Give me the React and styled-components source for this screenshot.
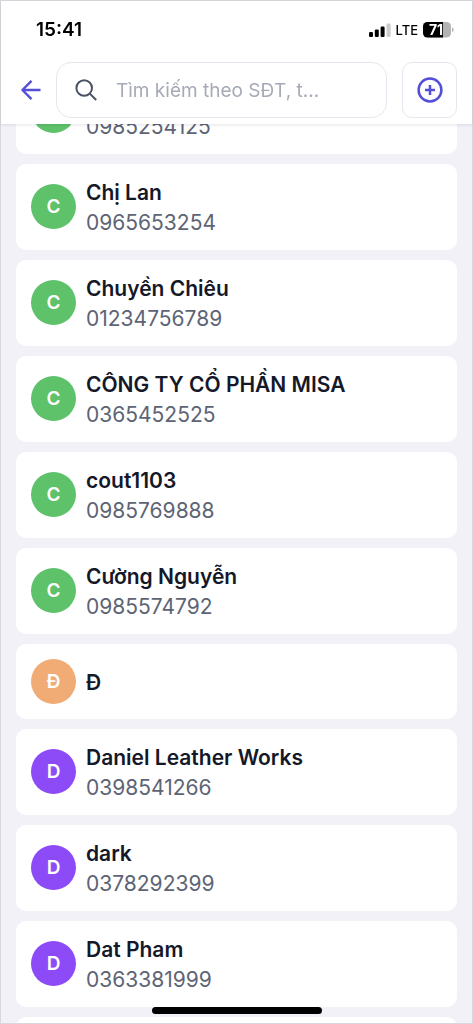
import React from 'react';
import styled, { createGlobalStyle } from 'styled-components';

const GlobalStyle = createGlobalStyle`
  * {
    box-sizing: border-box;
  }
  body {
    margin: 0;
    font-family: Inter, 'Noto Sans', sans-serif;
    color: #141828;
  }
`;

const Screen = styled.div`
  height: 100vh;
  overflow: hidden;
  border: 1px solid #d8d8dc;
  background: #f2f1f7;
`;

const Header = styled.header`
  position: fixed;
  top: 1px;
  left: 1px;
  right: 1px;
  z-index: 1;
  padding-bottom: 6px;
  background: #fff;
  box-shadow: 0 1px 3px rgba(40, 40, 80, 0.12);
`;

const StatusBar = styled.div`
  display: flex;
  align-items: center;
  justify-content: space-between;
  height: 57px;
  padding: 0 18px 0 35px;
  color: #000;
`;

const Clock = styled.time`
  font-size: 19px;
  font-weight: 600;
`;

const StatusIcons = styled.div`
  display: flex;
  align-items: center;
  gap: 5px;
  font-size: 13px;
  font-weight: 500;
`;

const Toolbar = styled.div`
  display: flex;
  align-items: center;
  gap: 15px;
  padding: 4px 15px 0 19px;
`;

const BackButton = styled.button`
  display: flex;
  padding: 0;
  border: 0;
  background: none;
  color: #534fd6;
`;

const SearchBox = styled.label`
  display: flex;
  flex: 1;
  align-items: center;
  gap: 18px;
  min-width: 0;
  height: 56px;
  padding: 0 17px;
  border: 1px solid #e6e6ee;
  border-radius: 15px;
  color: #4b5263;
`;

const SearchInput = styled.input`
  flex: 1;
  min-width: 0;
  padding: 0;
  border: 0;
  outline: 0;
  background: none;
  font: 400 19px Inter, 'Noto Sans', sans-serif;
  color: #141828;
  &::placeholder {
    color: #a5aab6;
  }
`;

const AddButton = styled.button`
  display: flex;
  align-items: center;
  justify-content: center;
  width: 55px;
  height: 56px;
  padding: 0;
  border: 1px solid #e6e6ee;
  border-radius: 10px;
  background: #fff;
  color: #534fd6;
`;

const List = styled.ul`
  display: flex;
  flex-direction: column;
  gap: 10px;
  height: 100%;
  margin: 0;
  padding: 67px 15px 0;
  overflow-y: auto;
  scrollbar-width: none;
  list-style: none;
`;

const Card = styled.li`
  display: flex;
  flex-shrink: 0;
  align-items: center;
  gap: 10px;
  min-height: 75px;
  padding: 14px 15px 12px;
  border-radius: 10px;
  background: #fff;
`;

const Avatar = styled.div`
  display: flex;
  flex-shrink: 0;
  align-items: center;
  justify-content: center;
  width: 45px;
  height: 45px;
  margin-bottom: 3px;
  border-radius: 50%;
  background: ${({ $color }) => $color};
  color: #fff;
  font-size: 19px;
  font-weight: 600;
`;

const Name = styled.div`
  min-height: 30px;
  font-size: 21px;
  font-weight: 600;
  line-height: 30px;
`;

const Phone = styled.div`
  font-size: 21px;
  line-height: 30px;
  color: #5d6474;
`;

const HomeIndicator = styled.div`
  position: fixed;
  bottom: 10px;
  left: 50%;
  z-index: 1;
  width: 170px;
  height: 7px;
  border-radius: 4px;
  background: #000;
  transform: translateX(-50%);
`;

const GREEN = '#5dc269';
const ORANGE = '#f1ac76';
const PURPLE = '#8c4bf6';

const contacts = [
  { initial: 'C', color: GREEN, phone: '0985254125' },
  { initial: 'C', color: GREEN, name: 'Chị Lan', phone: '0965653254' },
  { initial: 'C', color: GREEN, name: 'Chuyền Chiêu', phone: '01234756789' },
  { initial: 'C', color: GREEN, name: 'CÔNG TY CỔ PHẦN MISA', phone: '0365452525' },
  { initial: 'C', color: GREEN, name: 'cout1103', phone: '0985769888' },
  { initial: 'C', color: GREEN, name: 'Cường Nguyễn', phone: '0985574792' },
  { initial: 'Đ', color: ORANGE, name: 'Đ' },
  { initial: 'D', color: PURPLE, name: 'Daniel Leather Works', phone: '0398541266' },
  { initial: 'D', color: PURPLE, name: 'dark', phone: '0378292399' },
  { initial: 'D', color: PURPLE, name: 'Dat Pham', phone: '0363381999' },
];

const SignalIcon = () => (
  <svg width="22" height="14" viewBox="0 0 22 14" fill="#000">
    <rect x="0" y="9" width="4" height="5" rx="1.2" />
    <rect x="5.8" y="6.5" width="4" height="7.5" rx="1.2" />
    <rect x="11.6" y="3.5" width="4" height="10.5" rx="1.2" />
    <rect x="17.6" y="0.5" width="4" height="13.5" rx="1.2" fill="#ccc" />
  </svg>
);

const BatteryIcon = () => (
  <svg width="31" height="16" viewBox="0 0 31 16">
    <clipPath id="battery-body">
      <rect width="28" height="15.5" rx="4.5" />
    </clipPath>
    <g clipPath="url(#battery-body)">
      <rect width="28" height="16" fill="#b3b3b3" />
      <rect width="20" height="16" fill="#000" />
    </g>
    <path d="M29 5.5c1.3.5 1.7 1.3 1.7 2.2s-.4 1.7-1.7 2.2z" fill="#b3b3b3" />
    <text x="13" y="12.9" textAnchor="middle" fontSize="14" fontWeight="700" fill="#fff">
      71
    </text>
  </svg>
);

const BackIcon = () => (
  <svg width="21" height="22" viewBox="0 0 21 22" fill="none" stroke="currentColor" strokeWidth="2.4">
    <path d="M20.5 11H2.5M11.5 1.8L2.4 11l9.1 9.2" strokeLinejoin="round" />
  </svg>
);

const SearchIcon = () => (
  <svg width="24" height="24" viewBox="0 0 24 24" fill="none" stroke="currentColor" strokeWidth="2">
    <circle cx="10.2" cy="10" r="7.8" />
    <path d="M15.8 15.6L22.2 22" />
  </svg>
);

const AddIcon = () => (
  <svg width="26" height="26" viewBox="0 0 26 26" fill="none" stroke="currentColor" strokeWidth="2.5">
    <circle cx="13" cy="13" r="11.4" />
    <path d="M13 8v10M8 13h10" />
  </svg>
);

const ContactCard = ({ initial, color, name, phone }) => (
  <Card>
    <Avatar $color={color}>{initial}</Avatar>
    <div>
      <Name>{name}</Name>
      {phone && <Phone>{phone}</Phone>}
    </div>
  </Card>
);

const App = () => (
  <Screen>
    <GlobalStyle />
    <Header>
      <StatusBar>
        <Clock>15:41</Clock>
        <StatusIcons>
          <SignalIcon />
          <span>LTE</span>
          <BatteryIcon />
        </StatusIcons>
      </StatusBar>
      <Toolbar>
        <BackButton type="button" aria-label="Quay lại">
          <BackIcon />
        </BackButton>
        <SearchBox>
          <SearchIcon />
          <SearchInput
            type="text"
            aria-label="Tìm kiếm"
            placeholder="Tìm kiếm theo SĐT, t..."
          />
        </SearchBox>
        <AddButton type="button" aria-label="Thêm">
          <AddIcon />
        </AddButton>
      </Toolbar>
    </Header>
    <List>
      {contacts.map((contact) => (
        <ContactCard key={contact.phone || contact.name} {...contact} />
      ))}
      <Card />
    </List>
    <HomeIndicator />
  </Screen>
);

export default App;
